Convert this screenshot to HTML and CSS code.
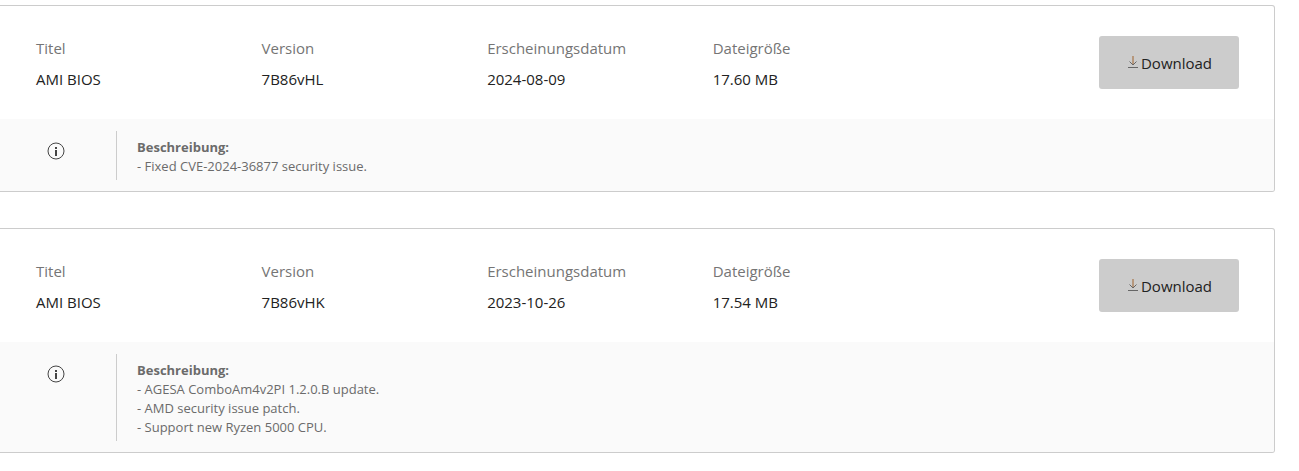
FILE: index.html
```
<!DOCTYPE html>
<html lang="de">
<head>
<meta charset="UTF-8" />
<meta name="viewport" content="width=device-width, initial-scale=1" />
<title>BIOS Downloads</title>
<link rel="stylesheet" href="styles.css">
</head>
<body>
  <main class="downloads">
    <article class="card">
      <div class="card-top">
        <dl class="info">
          <div><dt>Titel</dt><dd>AMI BIOS</dd></div>
          <div><dt>Version</dt><dd>7B86vHL</dd></div>
          <div><dt>Erscheinungsdatum</dt><dd>2024-08-09</dd></div>
          <div><dt>Dateigröße</dt><dd>17.60 MB</dd></div>
        </dl>
        <button type="button" class="download-btn">
          <svg class="download-icon" viewBox="0 0 10 14" aria-hidden="true"><path class="shaft" d="M5 0v9" /><path d="M1.500 5.500L5 9l3.500-3.500M0 11.500h10" /></svg>
          <span>Download</span>
        </button>
      </div>
      <div class="card-desc">
        <div class="desc-icon">
          <svg viewBox="0 0 18 18" aria-hidden="true"><circle cx="9" cy="9" r="8" /><path d="M9 8v6M9 5v2" /></svg>
        </div>
        <div class="desc-text">
          <strong>Beschreibung:</strong>
          <p>- Fixed CVE-2024-36877 security issue.</p>
        </div>
      </div>
    </article>

    <article class="card">
      <div class="card-top">
        <dl class="info">
          <div><dt>Titel</dt><dd>AMI BIOS</dd></div>
          <div><dt>Version</dt><dd>7B86vHK</dd></div>
          <div><dt>Erscheinungsdatum</dt><dd>2023-10-26</dd></div>
          <div><dt>Dateigröße</dt><dd>17.54 MB</dd></div>
        </dl>
        <button type="button" class="download-btn">
          <svg class="download-icon" viewBox="0 0 10 14" aria-hidden="true"><path class="shaft" d="M5 0v9" /><path d="M1.500 5.500L5 9l3.500-3.500M0 11.500h10" /></svg>
          <span>Download</span>
        </button>
      </div>
      <div class="card-desc">
        <div class="desc-icon">
          <svg viewBox="0 0 18 18" aria-hidden="true"><circle cx="9" cy="9" r="8" /><path d="M9 8v6M9 5v2" /></svg>
        </div>
        <div class="desc-text">
          <strong>Beschreibung:</strong>
          <p>- AGESA ComboAm4v2PI 1.2.0.B update.<br>
          - AMD security issue patch.<br>
          - Support new Ryzen 5000 CPU.</p>
        </div>
      </div>
    </article>
  </main>
</body>
</html>
```
FILE: styles.css
```
* {
  box-sizing: border-box;
}
body {
  margin: 0;
  font-family: 'Segoe UI', 'Open Sans', 'Noto Sans', sans-serif;
  font-size: 15px;
  line-height: 24px;
  color: #222;
  background-color: #fff;
}
.downloads {
  display: flex;
  flex-direction: column;
  gap: 36px;
  padding: 5px 24px 16px 0;
}
/* Card */
.card {
  border: 1px solid #ccc;
  border-left: none;
  border-radius: 0 3px 3px 0;
  overflow: hidden;
}
.card-top {
  display: grid;
  grid-template-columns: 3fr 1fr;
  align-items: start;
  padding: 30px 35px 28px 36px;
}
.info {
  display: grid;
  grid-template-columns: repeat(4, 1fr);
  margin: 0;
}
.info dt {
  margin-bottom: 7px;
  color: #757575;
}
.info dd {
  margin: 0;
}
/* Download button */
.download-btn {
  display: flex;
  justify-content: center;
  align-items: center;
  justify-self: end;
  gap: 3px;
  width: 140px;
  height: 53px;
  padding: 0 0 0 2px;
  border: none;
  border-radius: 3px;
  background-color: #ccc;
  color: #222;
  font: inherit;
  cursor: pointer;
}
.download-btn:hover {
  background-color: #bbb;
}
.download-icon {
  width: 10px;
  height: 14px;
  fill: none;
  stroke: #666;
}
.download-icon .shaft {
  stroke: #a0622d;
}
/* Description */
.card-desc {
  display: flex;
  padding: 12px 35px 11px 0;
  background-color: #fafafa;
  color: #6b6b6b;
  font-size: 13px;
  line-height: 19px;
}
.desc-icon {
  width: 116px;
  padding: 11px 0 0 47px;
}
.desc-icon svg {
  display: block;
  width: 18px;
  height: 18px;
  fill: none;
  stroke: #444;
}
.desc-icon path {
  stroke-width: 2;
}
.desc-text {
  flex: 1;
  padding: 6px 0 4px 20px;
  border-left: 1px solid #ccc;
}
.desc-text strong {
  display: block;
  line-height: 20px;
}
.desc-text p {
  margin: 0;
}
```
